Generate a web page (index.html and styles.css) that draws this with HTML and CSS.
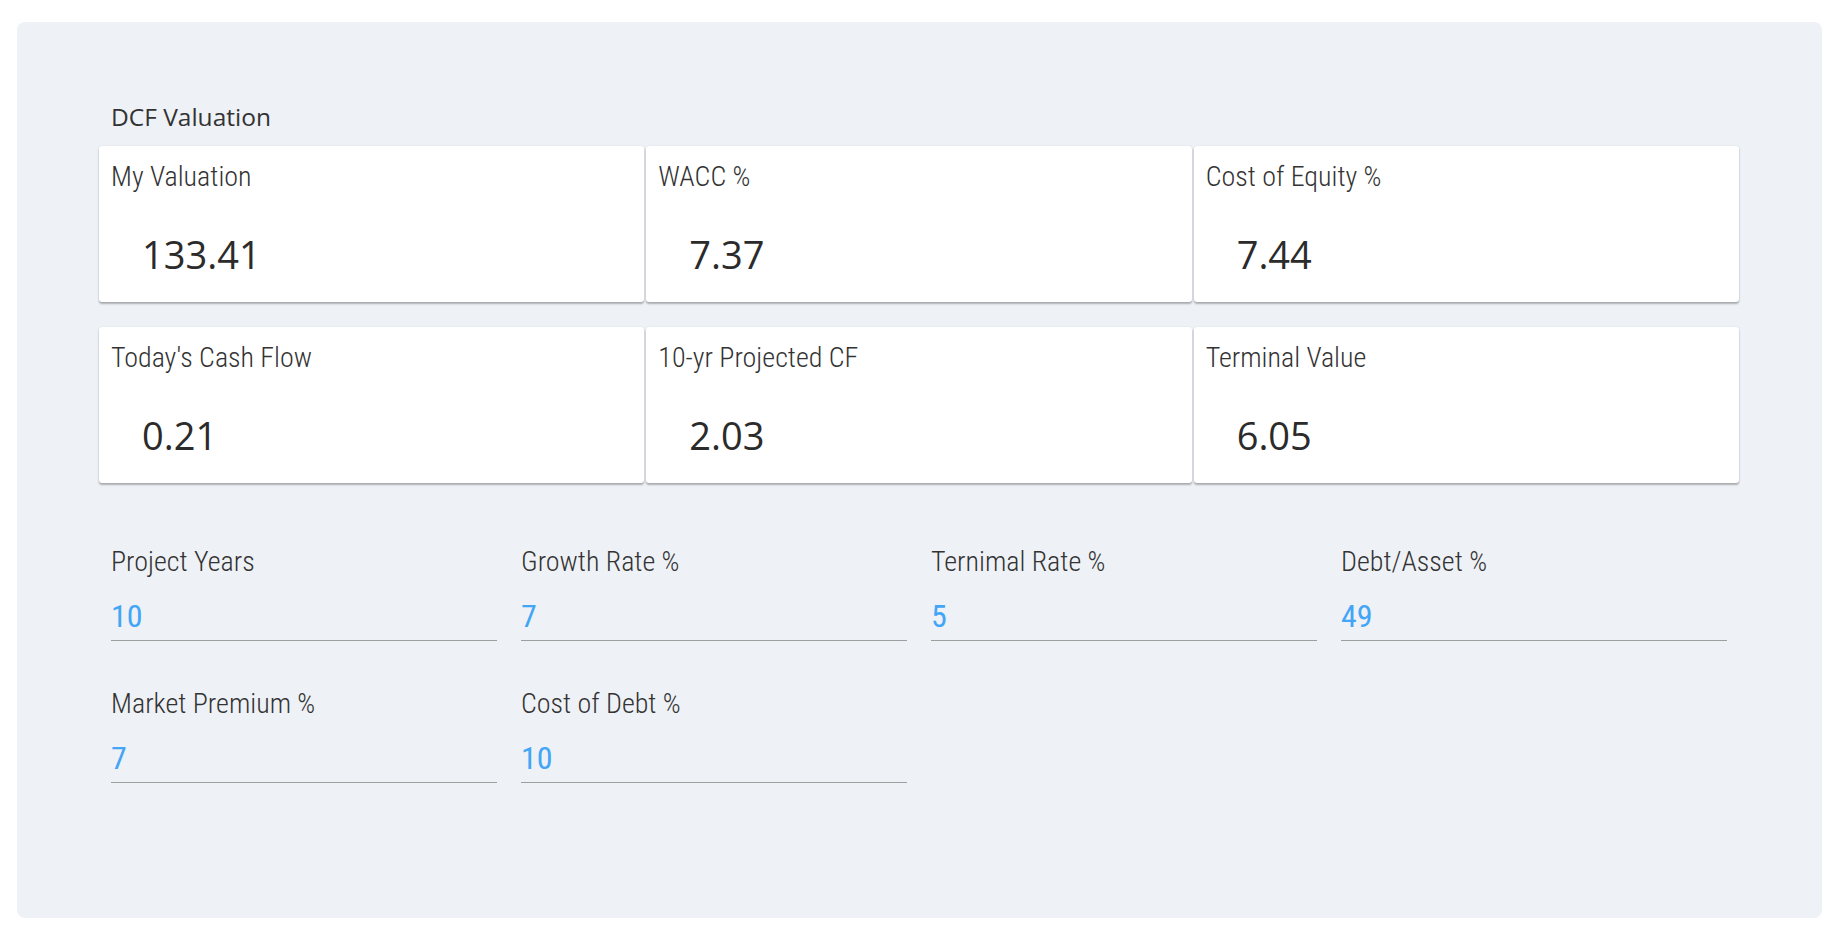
FILE: index.html
```html
<!DOCTYPE html>
<html lang="en">
<head>
<meta charset="utf-8">
<title>DCF Valuation</title>
<link rel="stylesheet" href="styles.css">
</head>
<body>
<div class="page">
  <section class="panel">
    <h2 class="title">DCF Valuation</h2>
    <div class="cards">
      <div class="card"><div class="card-label">My Valuation</div><div class="card-value">133.41</div></div>
      <div class="card"><div class="card-label">WACC %</div><div class="card-value">7.37</div></div>
      <div class="card"><div class="card-label">Cost of Equity %</div><div class="card-value">7.44</div></div>
    </div>
    <div class="cards">
      <div class="card"><div class="card-label">Today's Cash Flow</div><div class="card-value">0.21</div></div>
      <div class="card"><div class="card-label">10-yr Projected CF</div><div class="card-value">2.03</div></div>
      <div class="card"><div class="card-label">Terminal Value</div><div class="card-value">6.05</div></div>
    </div>
    <div class="fields">
      <label class="field"><span class="field-label">Project Years</span><input class="field-input" type="text" value="10"></label>
      <label class="field"><span class="field-label">Growth Rate %</span><input class="field-input" type="text" value="7"></label>
      <label class="field"><span class="field-label">Ternimal Rate %</span><input class="field-input" type="text" value="5"></label>
      <label class="field"><span class="field-label">Debt/Asset %</span><input class="field-input" type="text" value="49"></label>
      <label class="field"><span class="field-label">Market Premium %</span><input class="field-input" type="text" value="7"></label>
      <label class="field"><span class="field-label">Cost of Debt %</span><input class="field-input" type="text" value="10"></label>
    </div>
  </section>
</div>
</body>
</html>
```
FILE: styles.css
```css
html, body {
  margin: 0;
  padding: 0;
  background: #ffffff;
}

.page {
  padding: 22px 24px 18px 17px;
}

.panel {
  background: #eef1f6;
  border-radius: 8px;
  padding: 79px 83px 135px 82px;
  color: #333333;
}

.title {
  margin: 0 0 13px 12px;
  font-family: "Open Sans", "Noto Sans", sans-serif;
  font-weight: 400;
  font-size: 24.5px;
  line-height: 32px;
  color: #333333;
}

.cards {
  display: grid;
  grid-template-columns: repeat(3, 1fr);
  gap: 2px;
  margin-bottom: 25px;
}

.card {
  background: #ffffff;
  border-radius: 3px;
  box-shadow: 0 2px 2px rgba(0, 0, 0, 0.28), 0 0 2px rgba(0, 0, 0, 0.10);
  padding: 15px 12px 24px;
}

.card-label {
  font-family: Roboto, "Liberation Sans", sans-serif;
  font-weight: 300;
  font-stretch: 87.5%;
  font-size: 28px;
  line-height: 32px;
  color: #333333;
}

.card-value {
  margin-top: 37px;
  padding-left: 31px;
  font-family: "Open Sans", "Noto Sans", sans-serif;
  font-weight: 400;
  font-size: 38px;
  line-height: 48px;
  color: #2b2b2b;
}

.fields {
  display: grid;
  grid-template-columns: repeat(4, 1fr);
  row-gap: 47px;
  margin-top: 63px;
}

.field {
  display: flex;
  flex-direction: column;
  padding: 0 12px;
}

.field-label {
  font-family: Roboto, "Liberation Sans", sans-serif;
  font-weight: 300;
  font-stretch: 87.5%;
  font-size: 28px;
  line-height: 32px;
  color: #333333;
}

.field-input {
  margin-top: 18px;
  padding: 0 0 4px;
  border: 0;
  border-bottom: 1px solid #9e9e9e;
  background: transparent;
  outline: none;
  font-family: Roboto, "Liberation Sans", sans-serif;
  font-weight: 400;
  font-stretch: 87.5%;
  font-size: 32px;
  line-height: 40px;
  height: 40px;
  color: #42a5f5;
  width: 100%;
  box-sizing: content-box;
}
```
